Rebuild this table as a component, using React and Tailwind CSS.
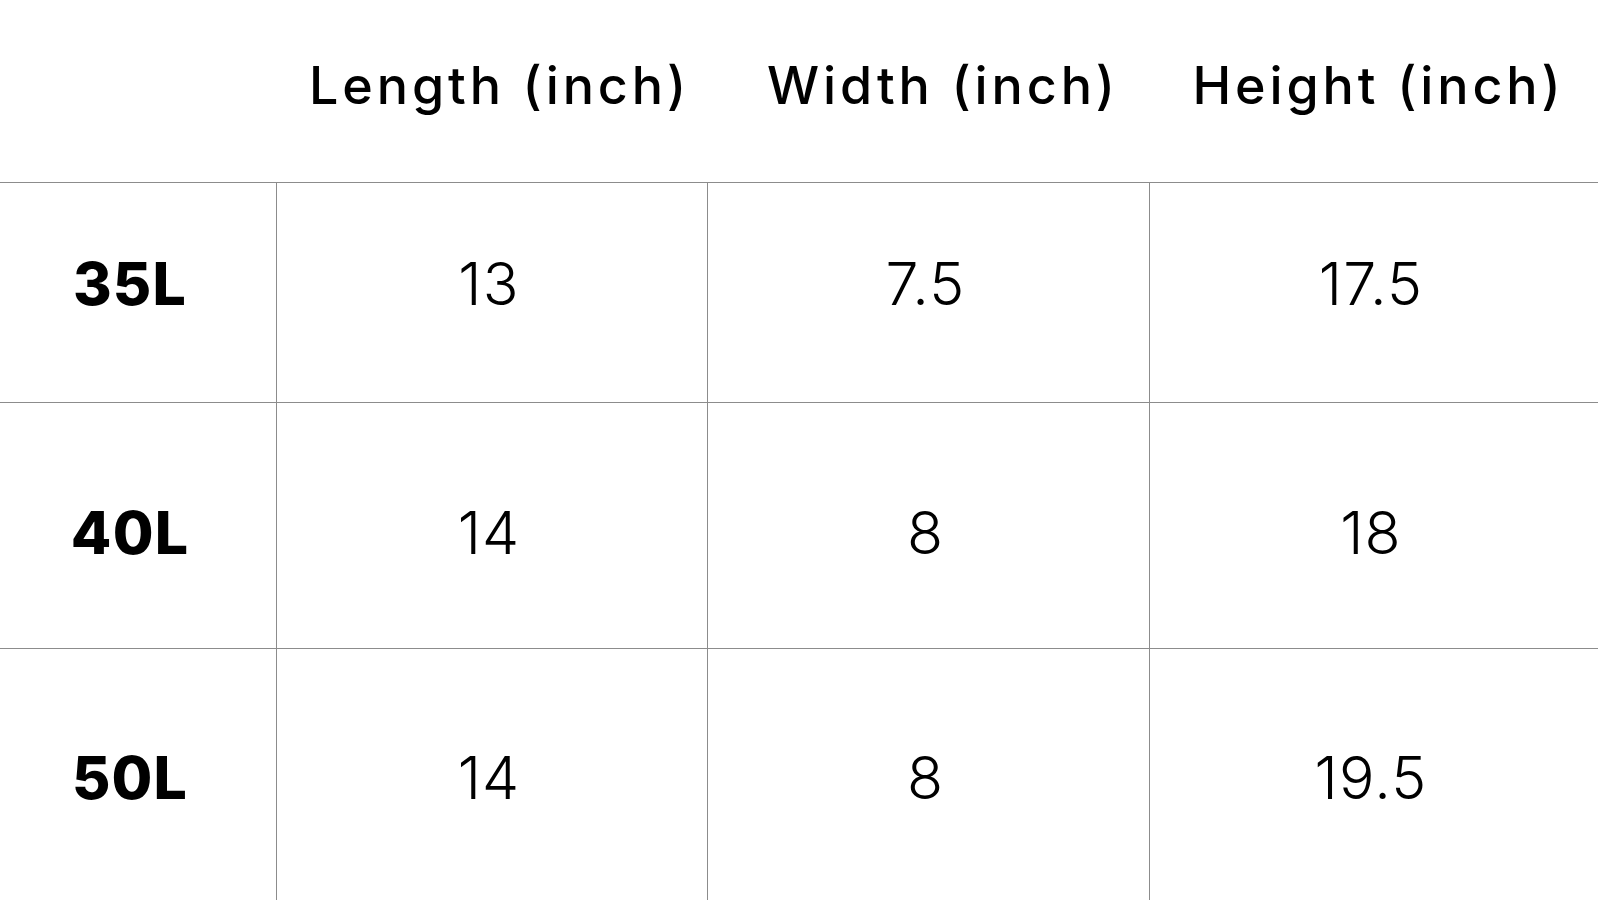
import React from 'react';

const headers = [
  { text: 'Length (inch)', shift: 'pl-[16px]' },
  { text: 'Width (inch)', shift: 'pl-[30px]' },
  { text: 'Height (inch)', shift: 'pl-[10px]' },
];

const rows = [
  { label: '35L', values: ['13', '7.5', '17.5'], height: 'h-[220px]', shift: 'pb-[19px]' },
  { label: '40L', values: ['14', '8', '18'], height: 'h-[246px]', shift: 'pt-[14px]' },
  { label: '50L', values: ['14', '8', '19.5'], height: 'h-[252px]', shift: 'pt-[6px]' },
];

const cols = 'grid grid-cols-[276px_431px_442px_449px]';

function App() {
  return (
    <div className="min-h-[900px] w-full overflow-hidden bg-white text-black font-['Inter','Liberation_Sans',sans-serif]">
      <div className="w-[1598px]">
        <div className={`${cols} h-[182px] items-center pb-[10px]`}>
          <div />
          {headers.map((h) => (
            <div
              key={h.text}
              className={`text-center text-[52px] font-medium leading-none tracking-[0.075em] ${h.shift}`}
            >
              {h.text}
            </div>
          ))}
        </div>

        {rows.map((row) => (
          <div key={row.label} className={`${cols} ${row.height} border-t border-[#8c8c8c]`}>
            <div className={`flex items-center justify-center pr-[16px] ${row.shift}`}>
              <span className="text-[59px] font-extrabold leading-none tracking-[0.02em]">{row.label}</span>
            </div>
            {row.values.map((v, i) => (
              <div
                key={i}
                className={`flex items-center justify-center border-l border-[#8c8c8c] pr-[6px] ${row.shift}`}
              >
                <span className="text-[59px] font-light leading-none tracking-[0.02em]">{v}</span>
              </div>
            ))}
          </div>
        ))}
      </div>
    </div>
  );
}

export default App;
